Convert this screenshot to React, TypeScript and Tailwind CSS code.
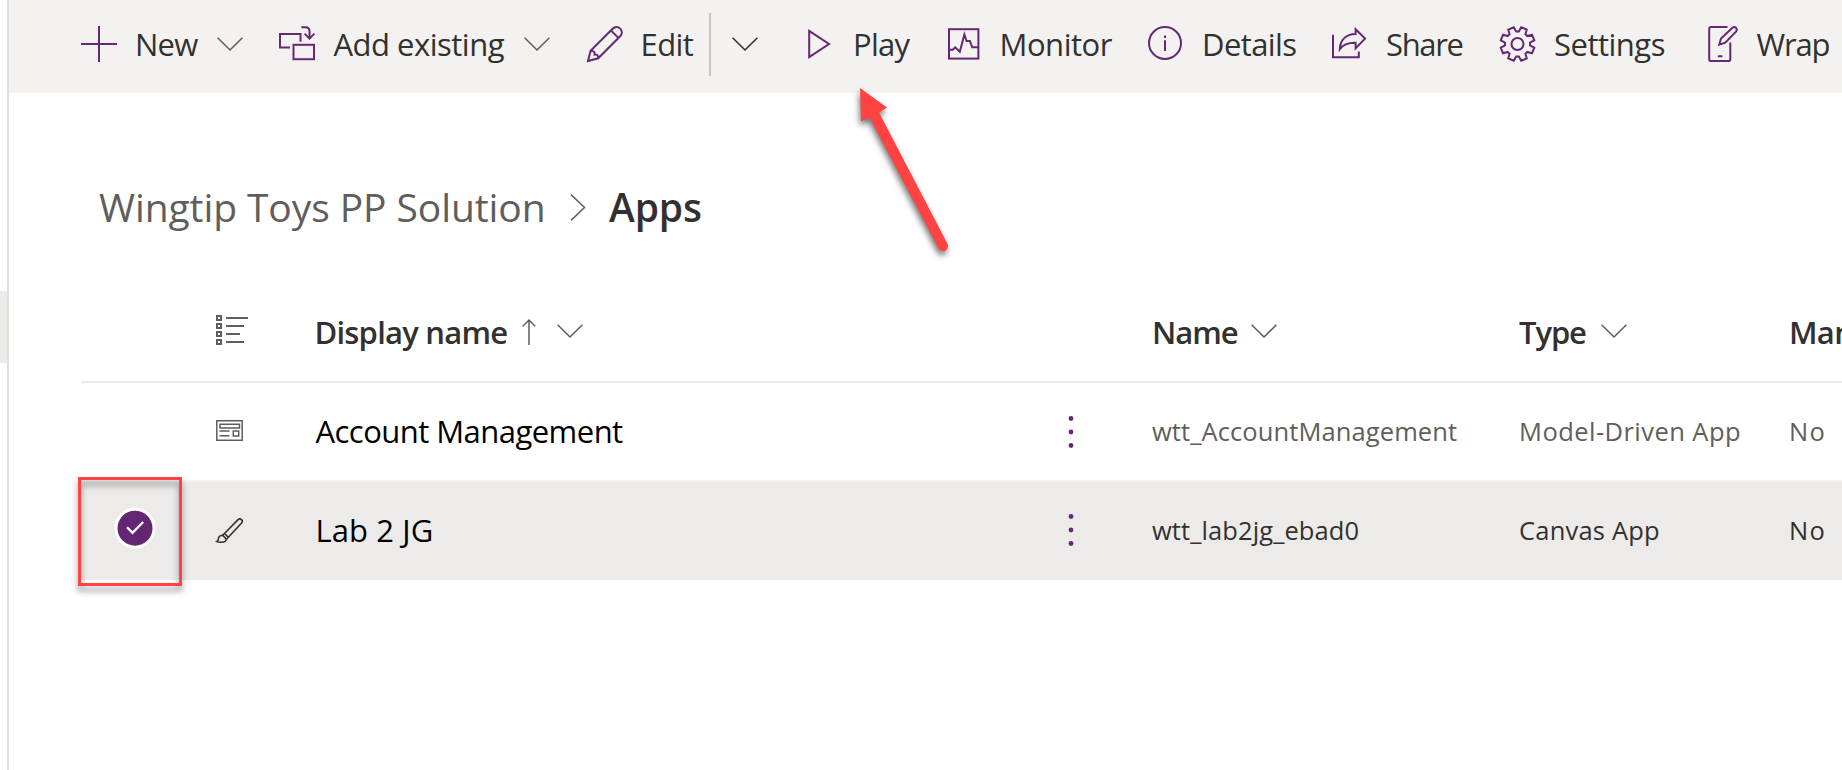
import type { ReactNode } from "react";

const FONT = "font-['Open_Sans','Noto_Sans',sans-serif]";

type IconProps = { w: number; h?: number; sw?: number; className?: string; children: ReactNode };

function Icon({ w, h = 36, sw = 2, className = "text-[#652874]", children }: IconProps) {
  return (
    <svg
      width={w}
      height={h}
      viewBox={`0 0 ${w} ${h}`}
      fill="none"
      stroke="currentColor"
      strokeWidth={sw}
      className={`block shrink-0 overflow-visible ${className}`}
    >
      {children}
    </svg>
  );
}

function Chevron({ className = "text-[#605e5c]" }: { className?: string }) {
  return (
    <Icon w={26} h={14} sw={1.6} className={className}>
      <path d="M.6.8 13 13 25.4.8" />
    </Icon>
  );
}

const gearPath = (() => {
  const pt = (deg: number, r: number) => {
    const a = (deg * Math.PI) / 180;
    return `${(18.5 + r * Math.sin(a)).toFixed(2)} ${(18 - r * Math.cos(a)).toFixed(2)}`;
  };
  const pts: string[] = [];
  for (let k = 0; k < 8; k++) {
    const b = k * 45;
    pts.push(pt(b + 6, 12.6), pt(b + 12.5, 17.2), pt(b + 32.5, 17.2), pt(b + 39, 12.6));
  }
  return `M${pts.join("L")}Z`;
})();

const PlusIcon = () => (
  <Icon w={36}><path d="M18 0v36M0 18h36" /></Icon>
);
const AddExistingIcon = () => (
  <Icon w={36}>
    <path d="M11 21.5H1V8h20.5v7.7" />
    <rect x="14.5" y="18.8" width="20.5" height="14.4" />
    <path d="M22.3 1.2h4.2q4 0 4 4v7.3M25.6 7.6l4.9 5 4.9-5" />
  </Icon>
);
const PencilIcon = () => (
  <Icon w={36}>
    <path d="M1 35l2.6-10.2L25.6 2.8c2.2-2.2 5.4-2.3 7.6-.2s2.2 5.5 0 7.7L11.2 32.3zM24 4.5l7.6 7.6M3.6 24.8q4.8.2 4 3.7 3.7-.6 3.6 3.8" />
  </Icon>
);
const PlayIcon = () => (
  <Icon w={30}><path d="M4.2 4.9v26.2L24 18z" /></Icon>
);
const MonitorIcon = () => (
  <Icon w={32}>
    <rect x="1" y="3.2" width="29.4" height="29.4" />
    <path d="M1.5 23.7h3.2L7.2 21.4l4.6 4.4L16.4 8.5l2.2 6.6h3.3l2.3 6.1H30" />
  </Icon>
);
const DetailsIcon = () => (
  <Icon w={34}>
    <circle cx="17" cy="17" r="16" />
    <path d="M17 14.3v10.6M17 9.6v2.4" />
  </Icon>
);
const ShareIcon = () => (
  <Icon w={34}>
    <path d="M1 8.8v22.4h25.8v-5.8" />
    <path d="M23.6 3.2l9.5 9.4-9.5 9.6v-5.4c-7-.2-12.2 1.4-15.8 6.4C8 14.5 13.6 8.2 23.6 8z" />
  </Icon>
);
const GearIcon = () => (
  <Icon w={37}>
    <path d={gearPath} />
    <circle cx="18.5" cy="18" r="6" />
  </Icon>
);
const WrapIcon = () => (
  <Icon w={30}>
    <path d="M19.5 1H3Q1.2 1 1.2 2.8v30.4Q1.2 35 3 35h17.5q1.8 0 1.8-1.8V16.5M9.8 30.3h4.6" />
    <path d="M11.2 18.8l1.8-6.3L24.2 1.9c2.8-2.3 6 .9 3.8 3.7L17.3 16.7z" />
  </Icon>
);

type ToolProps = { icon: ReactNode; label: string; box: string; iconBox: string; text: string; menu?: boolean };

function Tool({ icon, label, box, iconBox, text, menu }: ToolProps) {
  return (
    <button className={`flex shrink-0 items-center ${box}`}>
      <span className={`shrink-0 ${iconBox}`}>{icon}</span>
      <span className={`shrink-0 text-left whitespace-nowrap ${text}`}>{label}</span>
      {menu && <Chevron />}
    </button>
  );
}

const COLS = "grid grid-cols-[135px_98.5px_747px_90.5px_367px_270px_1fr] items-center";

function HeaderCell({ label, className, asc }: { label: string; className: string; asc?: boolean }) {
  return (
    <div className="flex items-center whitespace-nowrap">
      <span className={className}>{label}</span>
      {asc && (
        <Icon w={14} h={26} sw={1.5} className="mr-[21px] text-[#605e5c]">
          <path d="M7 26V1M.8 7.2 7 1l6.2 6.2" />
        </Icon>
      )}
      <Chevron className="-mt-0.5 text-[#605e5c]" />
    </div>
  );
}

function Dots() {
  return (
    <svg width="6" height="32" viewBox="0 0 6 32" className="ml-[6.5px] fill-[#652874]">
      <circle cx="3" cy="2.5" r="2.4" />
      <circle cx="3" cy="16" r="2.4" />
      <circle cx="3" cy="29.5" r="2.4" />
    </svg>
  );
}

export default function App() {
  return (
    <div className={`relative flex h-[770px] w-[1842px] overflow-hidden bg-white text-[#323130] ${FONT}`}>
      <aside className="w-[9px] shrink-0 border-r-2 border-[#e1dfdd] pt-[291px]">
        <div className="h-[72px] bg-[#edebe9]" />
      </aside>

      <main className="min-w-0 flex-1">
        <div className="flex h-[93px] items-center overflow-hidden bg-[#f3f2f1] pb-[5px] pl-[72px] text-[31px] leading-[42px]">
          <Tool icon={<PlusIcon />} label="New" box="w-[198px]" iconBox="w-[54px]" text="w-[82px] tracking-[-0.8px]" menu />
          <Tool icon={<AddExistingIcon />} label="Add existing" box="w-[308px]" iconBox="w-[54.5px]" text="w-[190.5px] tracking-[-0.5px]" menu />
          <Tool icon={<PencilIcon />} label="Edit" box="w-[122px]" iconBox="w-[53.5px]" text="tracking-[-0.58px]" />
          <span className="h-[63px] w-0.5 shrink-0 bg-[#c8c6c4]" />
          <button className="mr-[47px] ml-[21px] shrink-0"><Chevron className="text-[#323130]" /></button>
          <Tool icon={<PlayIcon />} label="Play" box="w-[143px]" iconBox="w-[48px]" text="tracking-[-0.75px]" />
          <Tool icon={<MonitorIcon />} label="Monitor" box="w-[200px]" iconBox="w-[51.5px]" text="tracking-[-0.47px]" />
          <Tool icon={<DetailsIcon />} label="Details" box="w-[184px]" iconBox="w-[54px]" text="tracking-[-0.58px]" />
          <Tool icon={<ShareIcon />} label="Share" box="w-[167px]" iconBox="w-[54px]" text="tracking-[-1.35px]" />
          <Tool icon={<GearIcon />} label="Settings" box="w-[209px]" iconBox="w-[55px]" text="tracking-[-0.5px]" />
          <Tool icon={<WrapIcon />} label="Wrap" box="w-[134px]" iconBox="w-[48.5px]" text="tracking-[-1.2px]" />
        </div>

        <nav className="flex h-[190px] items-center pt-[38px] pl-[90px] text-[39px] leading-[54px] whitespace-nowrap">
          <span className="w-[470.5px] tracking-[-0.09px] text-[#605e5c]">Wingtip Toys PP Solution</span>
          <Icon w={16} h={27} sw={1.5} className="mr-[23.5px] text-[#605e5c]">
            <path d="M1 .6 14.5 13.5 1 26.4" />
          </Icon>
          <span className="font-semibold tracking-[-0.15px]">Apps</span>
        </nav>

        <div className="ml-[72px] text-[31px] leading-[42px]">
          <div className={`h-[100px] border-b-2 border-[#edebe9] font-semibold ${COLS}`}>
            <span />
            <Icon w={32} h={30} className="-mt-[5px] text-[#605e5c]">
              <path d="M1 1h4v4H1zM1 9h4v4H1zM1 17h4v4H1zM1 25h4v4H1zM10 3h22M10 11h18M10 19h14M10 27h18" />
            </Icon>
            <HeaderCell label="Display name" className="w-[207.5px] tracking-[-0.78px]" asc />
            <span />
            <HeaderCell label="Name" className="w-[99px] tracking-[-1px]" />
            <HeaderCell label="Type" className="w-[81.5px] tracking-[-1.1px]" />
            <HeaderCell label="Managed" className="w-[150px] tracking-[-0.7px]" />
          </div>

          <div className={`h-[97px] whitespace-nowrap ${COLS}`}>
            <span />
            <Icon w={27} h={21} sw={1.5} className="-mt-[3px] text-[#605e5c]">
              <path d="M.8.8h25.4v19.4H.8zM4 4.2h19.5v3.8H4zM3.5 11h10M3.5 15.8h10M17.3 11h5.4v5h-5.4z" />
            </Icon>
            <span className="-mt-0.5 ml-px tracking-[-0.54px] text-black">Account Management</span>
            <Dots />
            <span className="-mt-0.5 text-[25.5px] tracking-[0.1px] text-[#605e5c]">wtt_AccountManagement</span>
            <span className="-mt-0.5 text-[25.5px] tracking-[0.45px] text-[#605e5c]">Model-Driven App</span>
            <span className="-mt-0.5 text-[25.5px] tracking-[1.3px] text-[#605e5c]">No</span>
          </div>

          <div className={`h-[100px] border-t-2 border-[#f3f2f1] bg-[#edebe9] pb-0.5 whitespace-nowrap ${COLS}`}>
            <svg width="42" height="42" viewBox="0 0 42 42" className="-mt-1 ml-[33px]">
              <circle cx="21" cy="21" r="20.6" className="fill-white" />
              <circle cx="21" cy="21.2" r="17.5" className="fill-[#632673]" />
              <path d="M13 20.2l5.5 5.6L29.2 15" className="fill-none stroke-white" strokeWidth="2.3" />
            </svg>
            <Icon w={27} h={25} sw={1.6} className="text-[#323130]">
              <path d="M8.5 15.5 21.8 1.9c2.6-2.6 6.100.6 3.6 3.4L12.3 19.2M8.5 15.5l3.8 3.7M6.5 17.2l2-1.7M10.5 21.2l1.8-2M6.5 17.2c-2.7.3-4.2 2-4.2 4.3 0 1-.5 1.7-1.5 2.1 1.5.9 6.7 1 8.3-.3q1.100-1 1.4-2.1zM6.5 17.2l4 4" />
            </Icon>
            <span className="ml-px tracking-[0.1px] text-black">Lab 2 JG</span>
            <Dots />
            <span className="text-[25.5px] tracking-[0.1px]">wtt_lab2jg_ebad0</span>
            <span className="text-[25.5px] tracking-[0.2px]">Canvas App</span>
            <span className="text-[25.5px] tracking-[1.3px]">No</span>
          </div>
        </div>
      </main>

      <div className="pointer-events-none absolute top-[477px] left-[78px] h-[109px] w-[104px] border-[3px] border-[#ff4343] drop-shadow-[0_5px_3px_rgba(0,0,0,0.45)]" />
      <svg
        width="100"
        height="170"
        viewBox="0 0 100 170"
        className="pointer-events-none absolute top-[86px] left-[855px] overflow-visible fill-[#ff4343] drop-shadow-[-1px_4px_3px_rgba(0,0,0,0.55)]"
      >
        <path d="M5 2 32 21.5 24 26.5 92.3 157.5A5 5 0 0 1 83.5 162.5L14.5 31.5 6 35.5z" />
      </svg>
    </div>
  );
}
